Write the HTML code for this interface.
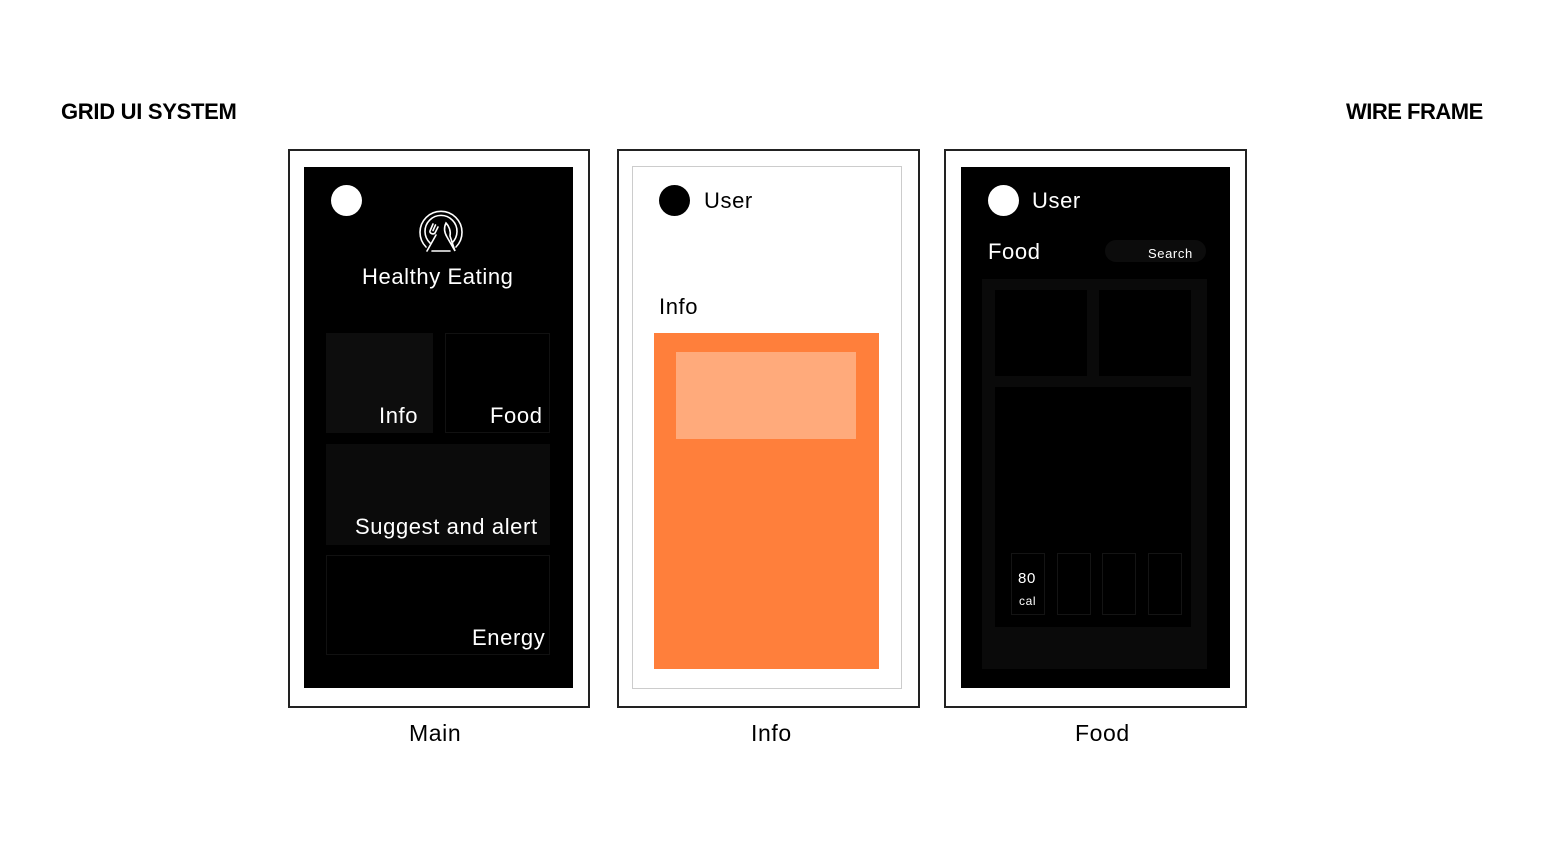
<!DOCTYPE html>
<html><head><style>
*{margin:0;padding:0;box-sizing:border-box}
body{width:1544px;height:862px;background:#fff;position:relative;overflow:hidden;font-family:"Liberation Sans",sans-serif}
.a{position:absolute}
.t{position:absolute;white-space:nowrap;line-height:1;letter-spacing:0.6px}
.frame{position:absolute;border:2px solid #222;background:#fff}
</style></head><body>
<div class="t" style="left:61px;top:101px;font-size:22px;font-weight:bold;letter-spacing:-0.3px">GRID UI SYSTEM</div>
<div class="t" style="left:1346px;top:101px;font-size:22px;font-weight:bold;letter-spacing:-0.5px">WIRE FRAME</div>

<!-- Main -->
<div class="frame" style="left:288px;top:149px;width:302px;height:559px"></div>
<div class="a" style="left:304px;top:167px;width:269px;height:521px;background:#000"></div>
<div class="a" style="left:331px;top:185px;width:31px;height:31px;border-radius:50%;background:#fff"></div>
<svg class="a" style="left:417px;top:207px" width="48" height="48" viewBox="0 0 48 48" fill="none" stroke="#fff" stroke-width="1.6" stroke-linecap="round">
<path d="M9 40 A21 21 0 1 1 39 40"/><path d="M13 36 A16 16 0 1 1 35 36"/>
<path d="M10 44 L19 28 M16 17 l-3 7 c-1 2 3 4 5 2 l3 -6 M18.5 18 l-2.5 5.5"/>
<path d="M38 44 L30 30 c-3-5-3-10-1-14 c3 3 5 8 4 13 z"/>
<path d="M15 44h18"/>
</svg>
<div class="t" style="left:362px;top:266px;font-size:22px;color:#fff">Healthy Eating</div>
<div class="a" style="left:326px;top:333px;width:107px;height:100px;background:#0d0d0d"></div>
<div class="a" style="left:445px;top:333px;width:105px;height:100px;border:1px solid #111"></div>
<div class="a" style="left:326px;top:444px;width:224px;height:101px;background:#0b0b0b"></div>
<div class="a" style="left:326px;top:555px;width:224px;height:100px;border:1px solid #111"></div>
<div class="t" style="left:379px;top:405px;font-size:22px;color:#fff">Info</div>
<div class="t" style="left:490px;top:405px;font-size:22px;color:#fff">Food</div>
<div class="t" style="left:355px;top:516px;font-size:22px;color:#fff">Suggest and alert</div>
<div class="t" style="left:472px;top:627px;font-size:22px;color:#fff">Energy</div>
<div class="t" style="left:409px;top:722px;font-size:23px">Main</div>

<!-- Info -->
<div class="frame" style="left:617px;top:149px;width:303px;height:559px"></div>
<div class="a" style="left:632px;top:166px;width:270px;height:523px;border:1px solid #ccc"></div>
<div class="a" style="left:659px;top:185px;width:31px;height:31px;border-radius:50%;background:#000"></div>
<div class="t" style="left:704px;top:190px;font-size:22px">User</div>
<div class="t" style="left:659px;top:296px;font-size:22px">Info</div>
<div class="a" style="left:654px;top:333px;width:225px;height:336px;background:#ff7f3b"></div>
<div class="a" style="left:676px;top:352px;width:180px;height:87px;background:#ffaa7b"></div>
<div class="t" style="left:751px;top:722px;font-size:23px">Info</div>

<!-- Food -->
<div class="frame" style="left:944px;top:149px;width:303px;height:559px"></div>
<div class="a" style="left:961px;top:167px;width:269px;height:521px;background:#000"></div>
<div class="a" style="left:988px;top:185px;width:31px;height:31px;border-radius:50%;background:#fff"></div>
<div class="t" style="left:1032px;top:190px;font-size:22px;color:#fff">User</div>
<div class="t" style="left:988px;top:241px;font-size:22px;color:#fff">Food</div>
<div class="a" style="left:1105px;top:240px;width:101px;height:22px;border-radius:11px;background:#0c0c0c"></div>
<div class="t" style="left:1148px;top:247px;font-size:13px;color:#fff">Search</div>
<div class="a" style="left:982px;top:279px;width:225px;height:390px;background:#0a0a0a"></div>
<div class="a" style="left:995px;top:290px;width:92px;height:86px;background:#000"></div>
<div class="a" style="left:1099px;top:290px;width:92px;height:86px;background:#000"></div>
<div class="a" style="left:995px;top:387px;width:196px;height:240px;background:#000"></div>
<div class="a" style="left:1011px;top:553px;width:34px;height:62px;border:1px solid #141414"></div>
<div class="a" style="left:1057px;top:553px;width:34px;height:62px;border:1px solid #141414"></div>
<div class="a" style="left:1102px;top:553px;width:34px;height:62px;border:1px solid #141414"></div>
<div class="a" style="left:1148px;top:553px;width:34px;height:62px;border:1px solid #141414"></div>
<div class="t" style="left:1018px;top:571px;font-size:15px;color:#fff">80</div>
<div class="t" style="left:1019px;top:595px;font-size:12px;color:#fff">cal</div>
<div class="t" style="left:1075px;top:722px;font-size:23px">Food</div>
</body></html>
